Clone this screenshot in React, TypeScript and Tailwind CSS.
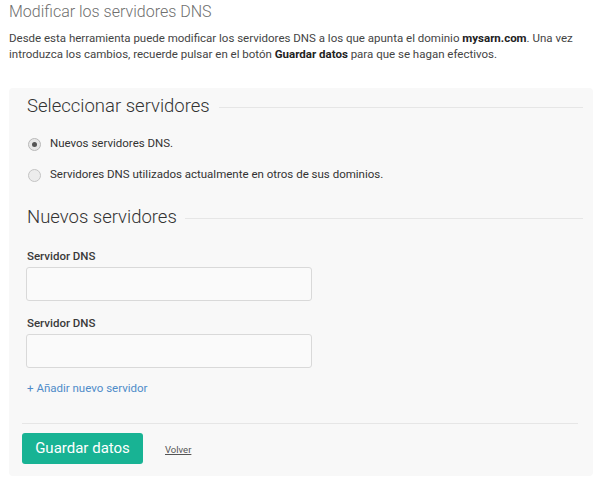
export default function App() {
  return (
    <div
      className="w-[604px] h-[490px] bg-white text-[#333]"
      style={{ fontFamily: "Roboto, 'Liberation Sans', sans-serif" }}
    >
      <div className="px-[9px] pt-[2px]">
        <h1 className="text-[16px] leading-[20px] font-light text-[#6f6f6f]">
          Modificar los servidores DNS
        </h1>
        <p className="mt-[8px] text-[11.5px] leading-[16px] text-[#444]">
          Desde esta herramienta puede modificar los servidores DNS a los que apunta el dominio{" "}
          <b className="font-bold text-[#222]">mysarn.com</b>. Una vez introduzca los cambios,
          recuerde pulsar en el botón <b className="font-bold text-[#222]">Guardar datos</b> para
          que se hagan efectivos.
        </p>

        <div className="mt-[26px] w-[584px] h-[388px] rounded-[4px] bg-[#f8f8f8] pl-[13px] pr-[10px] pt-[6px]">
          <div className="flex items-center pl-[5px] gap-[9px]">
            <h2 className="text-[18.5px] leading-[24px] font-light text-[#333] whitespace-nowrap">
              Seleccionar servidores
            </h2>
            <div className="flex-1 h-px bg-[#e6e6e6] mt-[3px]" />
          </div>

          <div className="mt-[18px] pl-[6px] flex flex-col gap-[15px] text-[11.5px] text-[#333]">
            <label className="flex items-center gap-[9px] h-[16px]">
              <span className="w-[13px] h-[13px] rounded-full border border-[#b9b9b9] bg-[#e8e8e8] flex items-center justify-center">
                <span className="w-[5px] h-[5px] rounded-full bg-[#555]" />
              </span>
              Nuevos servidores DNS.
            </label>
            <label className="flex items-center gap-[9px] h-[16px]">
              <span className="w-[13px] h-[13px] rounded-full border border-[#c4c4c4] bg-[#ececec]" />
              Servidores DNS utilizados actualmente en otros de sus dominios.
            </label>
          </div>

          <div className="mt-[22px] flex items-center pl-[5px] gap-[8px]">
            <h2 className="text-[18.5px] leading-[24px] font-light text-[#333] whitespace-nowrap">
              Nuevos servidores
            </h2>
            <div className="flex-1 h-px bg-[#e6e6e6] mt-[3px]" />
          </div>

          <div className="pl-[4px] mt-[20px]">
            <div className="text-[11.5px] leading-[14px] font-medium text-[#3a3a3a] pl-[1px]">
              Servidor DNS
            </div>
            <div className="mt-[4px] w-[286px] h-[34px] rounded-[3px] border border-[#d9d9d9] bg-[#fafafa]" />
            <div className="mt-[15px] text-[11.5px] leading-[14px] font-medium text-[#3a3a3a] pl-[1px]">
              Servidor DNS
            </div>
            <div className="mt-[4px] w-[286px] h-[34px] rounded-[3px] border border-[#d9d9d9] bg-[#fafafa]" />
            <div className="mt-[13px] text-[11.5px] leading-[14px] text-[#4f8cc9] pl-[1px]">
              + Añadir nuevo servidor
            </div>
          </div>

          <div className="mt-[28px] h-px bg-[#e6e6e6] w-[556px]" />

          <div className="mt-[9px] flex items-center">
            <button className="w-[121px] h-[31px] rounded-[3px] bg-[#18b394] text-white text-[15px] font-normal">
              Guardar datos
            </button>
            <a className="ml-[22px] mt-[4px] text-[9.5px] text-[#555] underline">Volver</a>
          </div>
        </div>
      </div>
    </div>
  );
}
